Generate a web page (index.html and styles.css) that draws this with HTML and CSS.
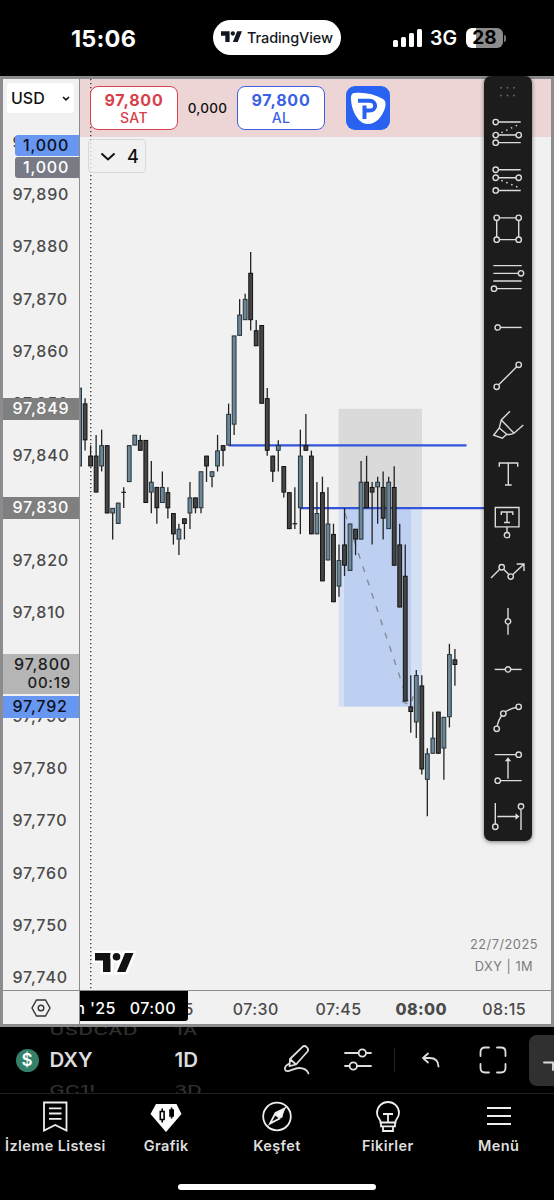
FILE: index.html
```html
<!DOCTYPE html>
<html lang="tr">
<head>
    <meta charset="UTF-8">
    <meta name="viewport" content="width=device-width, initial-scale=1.0">
    <title>DXY 97,800</title>
    <link rel="stylesheet" href="styles.css">
</head>
<body>
    <header class="status">
        <div class="clock">15:06</div>
        <div class="island">
            <svg width="21" height="12" viewBox="0 0 39 21"><path d="M0 0h16v20H8V8H0zM30 0h9l-8 20h-9z"/><circle cx="22" cy="4" r="4"/></svg>
            <span>TradingView</span>
        </div>
        <div class="signal">
            <svg width="30" height="20" viewBox="0 0 30 20">
                <rect x="0" y="12" width="5" height="7" rx="1.5"/><rect x="8" y="9" width="5" height="10" rx="1.5"/>
                <rect x="16" y="5" width="5" height="14" rx="1.5"/><rect x="24" y="1" width="5" height="18" rx="1.5"/>
            </svg>
            <span class="net">3G</span>
            <span class="battery">28</span>
            <i class="nub"></i>
        </div>
    </header>

    <main class="frame">
        <div class="top">
            <aside class="price-axis">
                <button class="currency">USD <svg width="8" height="5" viewBox="0 0 8 5"><path d="M1 1l3 2.8L7 1"/></svg></button>
                <div class="prices" id="prices"></div>
                <div class="tag blue small t-qty1">1,000</div>
                <div class="tag slate small t-qty2">1,000</div>
                <div class="tag grey t-849">97,849</div>
                <div class="tag grey t-830">97,830</div>
                <div class="tag light t-last">97,800<br><small>00:19</small></div>
                <div class="tag blue t-792">97,792</div>
            </aside>
            <section class="plot">
                <div class="band"></div>
                <svg id="chart" width="471" height="911" viewBox="0 0 471 911"></svg>
                <div class="trade">
                    <button class="order sell"><b>97,800</b><span>SAT</span></button>
                    <span class="spread">0,000</span>
                    <button class="order buy"><b>97,800</b><span>AL</span></button>
                    <svg class="broker" width="44" height="44" viewBox="0 0 44 44">
                        <rect width="44" height="44" rx="9" fill="#2962f0"/>
                        <path d="M9 7c9-1 19 1 28 6 3 2 3 5 2 9-3 9-9 16-17 16C12 38 5 24 5 12c0-3 1-5 4-5z" fill="#fff"/>
                        <path d="M12 14.800h11.500c7.500 0 7.500 9.500 0 9.500h-1.500M12 19.800h6v13" fill="none" stroke="none"/>
                        <path d="M12 14.800h11.500c7.500 0 7.500 9.800 0 9.800h-5M18.500 19.500v13.500" fill="none" stroke="#2962f0" stroke-width="4"/>
                    </svg>
                </div>
                <button class="legend"><svg width="16" height="9" viewBox="0 0 16 9"><path d="M1.500 1.500L8 7.500l6.500-6"/></svg>4</button>
                <svg class="mark" width="44" height="26" viewBox="-3 -3 44 26"><g><path d="M0 0h15.500v19H8V7.500H0zM30 0h8.500l-8 19h-8.500z"/><circle cx="21.500" cy="3.800" r="3.800"/></g></svg>
                <div class="watermark">22/7/2025<br>DXY | 1M</div>
            </section>
        </div>
        <div class="time-axis">
            <div class="gear"><svg width="20" height="18" viewBox="0 0 20 18"><path d="M5.500 1h9L19 9l-4.500 8h-9L1 9z"/><circle cx="10" cy="9" r="2.800"/></svg></div>
            <div class="times">
                <span>07:15</span><span>07:30</span><span>07:45</span><span class="hour">08:00</span><span>08:15</span>
                <div class="cursor-time">m '25&nbsp;&nbsp; 07:00</div>
            </div>
        </div>
    </main>

    <nav class="tools" id="tools">
        <svg class="grip" width="48" height="31.600" viewBox="-24 -15.800 48 31.600"><circle cx="-7" cy="-4"/><circle cx="-.5" cy="-4"/><circle cx="6" cy="-4"/><circle cx="-7" cy="3.700"/><circle cx="-.5" cy="3.700"/><circle cx="6" cy="3.700"/></svg>
    </nav>

    <div class="symbol-bar">
        <div class="coin">$</div>
        <div class="wheel symbol"><i>USDCAD</i><b>DXY</b><i>GC1!</i></div>
        <div class="wheel interval"><i>1A</i><b>1D</b><i>3D</i></div>
        <svg class="i-draw" width="30" height="32" viewBox="0 0 30 32"><path d="M8 15L20.500 2.800c2.500-2.200 7 1.500 5 4.700L14 20.500l-6.500 1.700zM8 15l6 5.500M7.500 19.500c-3 1.500-5 4-4.500 6 1.500 4.500 8-1.500 14-1.500 5 0 8 1.500 9.500 5.500"/></svg>
        <svg class="i-sliders" width="28" height="24" viewBox="0 0 28 24"><path d="M1 6h13.500M22 6h5M1 19h4.500M13 19h14"/><circle cx="18.300" cy="6" r="3.700"/><circle cx="9.300" cy="19" r="3.700"/></svg>
        <i class="divider"></i>
        <svg class="i-undo" width="20" height="16" viewBox="0 0 20 16"><path d="M7 1.500L2 6l5 4.500M2 6h6.500c6 0 9 3 9 8.500"/></svg>
        <svg class="i-full" width="28" height="28" viewBox="0 0 28 28"><path d="M10 1.500H6Q1.500 1.500 1.500 6v4M18 1.500h4q4.500 0 4.500 4.500v4M1.500 18v4q0 4.500 4.500 4.500h4M26.500 18v4q0 4.500-4.500 4.500h-4"/></svg>
        <div class="more"><svg width="12" height="12" viewBox="0 0 12 12"><path d="M1 2.500h9V10"/></svg></div>
    </div>

    <footer class="tabs">
        <a><svg width="32" height="32" viewBox="0 0 32 32"><path d="M5 2.500h22.500v28L16.200 25 5 30.500zM10 8.300h12.500M10 13.500h12.500M10 18.800h12.500"/></svg>İzleme Listesi</a>
        <a><svg width="32" height="32" viewBox="0 0 32 32"><path class="fill" d="M6 4h20.500L31.500 14 16 32 .5 14z"/><path class="dark" d="M10.300 11.500h3.800v8h-3.800zM12.200 8.500v3M12.200 19.500v3"/><path class="dark solid" d="M20 10h3.200v6H20zM21.600 7.500v11"/></svg>Grafik</a>
        <a><svg width="32" height="32" viewBox="0 0 32 32"><circle cx="16" cy="16.500" r="13.800"/><path class="fill" d="M23.500 9l-2.300 9-7.700-4z"/><path d="M23.500 8.500l-9 4.500-5.500 10.500 9.500-5zM13.500 14l5.500 4"/></svg>Keşfet</a>
        <a><svg width="32" height="32" viewBox="0 0 32 32"><path d="M8.500 22.500c.5-3-3.500-4.500-3.500-9.500a11 11 0 0 1 22 0c0 5-4 6.500-3.500 9.500zM9 22.500v3.800h14v-3.800M11 26.500V31h10v-4.500M11 14h10M16 14v8"/></svg>Fikirler</a>
        <a><svg width="32" height="32" viewBox="0 0 32 32"><path d="M4 8h24M4 16h24M4 24h24"/></svg>Menü</a>
    </footer>
    <div class="home"></div>

    <script src="chart.js"></script>
</body>
</html>
```

FILE: styles.css
```css
* { box-sizing: border-box; }
body { margin: 0; width: 554px; height: 1200px; background: #000; font-family: Inter, "Noto Sans", sans-serif; position: relative; overflow: hidden; }
button { font-family: inherit; margin: 0; padding: 0; }
svg { display: block; flex: none; }

/* status bar */
.status { height: 76px; display: flex; align-items: center; color: #fff; }
.clock { width: 213px; padding-left: 71px; font-size: 23.5px; font-weight: 700; letter-spacing: 0.2px; }
.island { width: 128px; height: 35px; margin-top: -2px; border-radius: 18px; background: #fff; color: #131722; display: flex; align-items: center; justify-content: center; gap: 5px; font-size: 14.5px; font-weight: 500; letter-spacing: -0.1px; }
.island svg { fill: #131722; }
.signal { display: flex; align-items: center; margin-left: 52px; }
.signal svg { fill: #fff; margin-top: -1px; }
.net { font-size: 19.5px; font-weight: 600; width: 36px; margin-left: 7px; }
.battery { width: 37px; height: 20px; margin-top: -1px; border-radius: 6px; background: linear-gradient(90deg, #fff 28%, #8c8c8c 28%); color: #000; font-size: 19px; font-weight: 700; line-height: 20px; text-align: center; }
.nub { width: 2px; height: 7px; margin-left: 1px; background: #777; border-radius: 0 2px 2px 0; }

/* chart */
.frame { height: 951px; border: 3px solid #8c8c8e; background: #f1f1f1; }
.top { display: flex; height: 912px; border-bottom: 1px solid #8c8c8c; }
.price-axis { width: 77px; border-right: 1px solid #8c8c8c; position: relative; overflow: hidden; color: #4a4a4a; }
.currency { position: absolute; z-index: 2; left: 4px; top: 4px; width: 67px; height: 30px; padding: 0 4px; border: 0; border-radius: 4px; background: #fff; color: #111; font-size: 16px; font-weight: 500; display: flex; align-items: center; justify-content: space-between; }
.currency svg, .legend svg { fill: none; stroke: #111; stroke-width: 1.6; }
.prices { padding-top: 37px; }
.prices div { height: 52.2px; line-height: 52.2px; padding-left: 9.5px; }
.prices div, .tag { font-size: 16px; font-weight: 500; letter-spacing: 0.8px; white-space: nowrap; }
.tag { position: absolute; left: 0; right: 0; height: 22px; line-height: 21px; padding-left: 9.5px; color: #fff; }
.tag small { font-size: 15px; }
.small { left: 12px; height: 21px; padding-left: 8px; border-radius: 3px 0 0 3px; }
.blue { background: #6797f0; color: #0c1020; }
.slate { background: #787b86; }
.grey { background: #7f7f7f; }
.light { background: #b5b5b5; color: #1c1c1c; height: 40px; line-height: 18px; padding-top: 1px; text-align: right; padding-right: 8px; }
.t-qty1 { top: 56px; }
.t-qty2 { top: 78px; }
.t-849 { top: 319px; }
.t-830 { top: 418px; }
.t-last { top: 575px; }
.t-792 { top: 617px; }

.plot { flex: 1; position: relative; overflow: hidden; }
.band { position: absolute; left: 0; right: 0; top: 0; height: 58px; background: #edd5d6; }
#chart { position: relative; }
.trade { position: absolute; left: 10px; top: 7px; height: 44px; display: flex; align-items: center; }
.order { width: 88px; height: 44px; border: 1px solid; border-radius: 8px; background: #fff; display: flex; flex-direction: column; align-items: center; justify-content: center; font-size: 14px; font-weight: 500; line-height: 18px; letter-spacing: 0.4px; padding-top: 2px; }
.order b { font-size: 16px; font-weight: 700; letter-spacing: 0.8px; }
.sell { color: #d8414b; }
.buy { color: #3c5fe4; }
.spread { width: 59px; text-align: center; font-size: 13.5px; font-weight: 500; color: #111; letter-spacing: 0.3px; }
.broker { margin-left: 21px; }
.legend { position: absolute; left: 8px; top: 60px; width: 58px; height: 34px; border: 1px solid #d8d8d8; border-radius: 4px; background: rgba(241, 241, 241, 0.8); display: flex; align-items: center; justify-content: center; gap: 11px; padding-left: 5px; font-size: 18px; font-weight: 500; color: #111; }
.legend svg { stroke-width: 2; }
.mark { position: absolute; left: 12px; top: 871px; }
.mark g { fill: #131313; stroke: #fff; stroke-width: 5; paint-order: stroke; }
.watermark { position: absolute; right: 13px; top: 855px; text-align: center; font-size: 12.8px; line-height: 22px; letter-spacing: 0.5px; color: #7c7c7c; }

.time-axis { display: flex; height: 33px; }
.gear { width: 77px; border-right: 1px solid #8c8c8c; display: flex; align-items: center; justify-content: center; }
.gear svg { fill: none; stroke: #333; stroke-width: 1.4; }
.times { flex: 1; position: relative; overflow: hidden; display: flex; align-items: center; padding-left: 51.5px; padding-top: 3px; font-size: 16px; font-weight: 500; letter-spacing: 0.4px; color: #4a4a4a; }
.times span { width: 82.8px; flex: none; text-align: center; }
.times .hour { font-weight: 800; }
.cursor-time { position: absolute; left: 0; top: 0; width: 108px; height: 30px; line-height: 35px; padding-right: 12px; border-radius: 0 0 3px 0; background: #000; color: #fff; display: flex; justify-content: flex-end; white-space: nowrap; }

/* candles and drawings */
.up { fill: #6d8797; stroke: #24343d; }
.down { fill: #454545; stroke: #111; }
.wick { stroke: #222; stroke-width: 1.3; }
.level { stroke: #3454dc; stroke-width: 2.2; }
.session { stroke: #222; stroke-width: 1.2; stroke-dasharray: 1.2 2.8; }
.stop { fill: #dadada; }
.target { fill: #d6e0f4; }
.target-hit { fill: #bdd0f1; }
.path { stroke: #858b96; stroke-width: 1.4; stroke-dasharray: 6 8; }

/* floating drawing tools */
.tools { position: absolute; left: 483.5px; top: 76px; width: 48.5px; height: 764.5px; border-radius: 7px; background: #1c1c1c; box-shadow: 0 1px 4px rgba(0, 0, 0, 0.5); }
.tools svg { fill: none; stroke: #dcdcdc; stroke-width: 1.4; margin-left: 0.5px; }
.tools circle { r: 2.7px; fill: #1c1c1c; }
.tools .dots { stroke-dasharray: 1.5 3.8; }
.tools .head { fill: #dcdcdc; stroke: none; }
.tools .grip circle { r: 1px; fill: #666; stroke: none; }

/* symbol row */
.symbol-bar { height: 67px; display: flex; align-items: center; border-bottom: 1px solid #222; overflow: hidden; color: #dcdcdc; }
.symbol-bar > * { flex: none; }
.symbol-bar svg { fill: none; stroke: #dedede; stroke-width: 1.8; stroke-linecap: round; stroke-linejoin: round; }
.coin { width: 23px; height: 23px; margin-left: 15.5px; border-radius: 50%; background: #35806b; color: #fff; font-size: 17px; font-weight: 600; line-height: 23px; text-align: center; }
.wheel { display: flex; flex-direction: column; }
.wheel b { font-size: 20.5px; font-weight: 600; line-height: 30px; }
.wheel i { font-style: normal; font-size: 20px; line-height: 30px; height: 30px; letter-spacing: 0.3px; font-weight: 500; color: #303030; transform: scaleY(0.65); }
.symbol { width: 125px; margin-left: 11px; }
.interval { width: 107px; }
.symbol i { letter-spacing: 0.6px; }
.i-sliders { margin-left: 32px; margin-top: -2px; }
.divider { width: 1px; height: 24px; margin-left: 22px; background: #252525; }
.i-undo { margin-left: 26px; }
.i-full { margin-left: 38px; }
.more { width: 40px; height: 51px; margin-left: 22px; border-radius: 8px; background: #303030; padding: 25px 0 0 14px; }

/* bottom tabs */
.tabs { display: flex; height: 90px; padding-top: 6px; }
.tabs a { flex: 1 1 0; min-width: 0; display: flex; flex-direction: column; align-items: center; gap: 5px; font-size: 14.5px; font-weight: 600; line-height: 18px; color: #dedede; white-space: nowrap; letter-spacing: 0.4px; }
.tabs svg { fill: none; stroke: #eee; stroke-width: 1.8; margin-top: -0.5px; }
.tabs .fill { fill: #fff; stroke: none; }
.tabs .dark { stroke: #000; stroke-width: 1.6; }
.tabs .solid { fill: #000; }
.home { width: 198px; height: 6px; margin: 0 auto; border-radius: 3px; background: #fff; }
```

FILE: chart.js
```js
// minute after 07:00, high, body top, body bottom, low, rising
const candles = [
    [-2, 853, 853, 838, 838, 1], [-1, 851, 850, 843, 841, 0], [0, 842, 840, 838, 838, 0], [1, 844, 840, 833, 833, 0],
    [2, 845, 842, 838, 837, 1], [3, 842, 842, 829, 829, 0], [4, 830, 830, 829, 824, 1], [5, 831, 831, 827, 827, 1],
    [6, 834, 833, 833, 830, 1], [7, 842, 842, 835, 835, 1], [8, 844, 844, 842, 842, 1], [9, 844, 843, 841, 841, 0],
    [10, 843, 843, 831, 831, 0], [11, 839, 835, 833, 829, 1], [12, 834, 834, 830, 827, 0], [13, 837, 834, 831, 831, 1],
    [14, 834, 833, 830, 828, 0], [15, 829, 829, 825, 823, 0], [16, 827, 826, 824, 821, 1], [17, 828, 828, 827, 824, 0],
    [18, 835, 832, 829, 826, 1], [19, 832, 832, 830, 829, 0], [20, 837, 837, 830, 829, 1], [21, 840, 840, 838, 835, 0],
    [22, 837, 837, 836, 834, 1], [23, 844, 841, 838, 837, 1], [24, 842, 842, 841, 838, 0], [25, 850, 848, 842, 842, 1],
    [26, 863, 863, 846, 844, 1], [27, 870, 867, 863, 863, 1], [28, 871, 870, 866, 866, 1], [29, 879, 875, 866, 864, 0],
    [30, 866, 864, 861, 861, 0], [31, 865, 865, 850, 850, 0], [32, 853, 851, 841, 840, 0], [33, 840, 840, 837, 835, 0],
    [34, 843, 842, 841, 837, 1], [35, 838, 838, 833, 832, 0], [36, 833, 833, 826, 826, 0], [37, 834, 827, 827, 826, 1],
    [38, 845, 840, 830, 825, 1], [39, 848, 842, 841, 841, 0], [40, 841, 840, 825, 825, 0], [41, 835, 829, 825, 825, 1],
    [42, 836, 833, 816, 816, 0], [43, 834, 827, 820, 820, 1], [44, 827, 825, 812, 812, 0], [45, 823, 820, 815, 813, 1],
    [46, 830, 823, 819, 817, 0], [47, 827, 827, 818, 818, 1], [48, 826, 826, 824, 821, 0], [49, 839, 835, 824, 824, 1],
    [50, 840, 835, 830, 830, 0], [51, 835, 834, 833, 823, 0], [52, 836, 835, 834, 827, 1], [53, 837, 834, 828, 824, 0],
    [54, 836, 835, 826, 826, 1], [55, 838, 834, 819, 819, 0], [56, 827, 823, 811, 811, 0], [57, 823, 817, 793, 793, 0],
    [58, 798, 792, 791, 787, 0], [59, 799, 798, 789, 786, 1], [60, 798, 796, 780, 779, 0], [61, 784, 783, 778, 771, 1],
    [62, 791, 786, 783, 783, 1], [63, 791, 791, 783, 783, 0], [64, 790, 790, 784, 778, 1], [65, 804, 802, 790, 788, 1],
    [66, 803, 801, 800, 796, 0]
];

const x = m => 10.6 + m * 5.52;
const y = p => 115.6 + (890 - p) * 5.224;
const line = (cls, x1, y1, x2, y2) => `<line class="${cls}" x1="${x1}" y1="${y1}" x2="${x2}" y2="${y2}"/>`;
const box = (cls, x1, y1, x2, y2) => `<rect class="${cls}" x="${x1}" y="${y1}" width="${x2 - x1}" height="${y2 - y1}"/>`;

let svg = line("session", 10.8, 0, 10.8, 911);
svg += box("stop", 258.5, y(849), 342, y(830));
svg += box("target", 258.5, y(830), 342, y(792));
svg += box("target-hit", 264, y(830), 331, y(792));
svg += line("level", x(25), y(842), 386.5, y(842));
svg += line("level", x(38), y(830), 410, y(830));
svg += line("path", 265, y(829), 328, y(793));
svg += `<path class="path" fill="none" d="M322 ${y(793)}l9 4l2-9"/>`;
candles.forEach(([m, high, top, bottom, low, rising]) => {
    const cx = x(m);
    svg += line("wick", cx, y(high), cx, y(low));
    if (top === bottom) {
        svg += line("wick", cx - 2.3, y(top), cx + 2.3, y(top));
    } else {
        svg += box(rising ? "up" : "down", cx - 1.9, y(top) + 0.3, cx + 1.9, y(bottom) - 0.3);
    }
});
document.getElementById("chart").innerHTML = svg;

let labels = "";
for (let p = 900; p >= 740; p -= 10) labels += `<div>97,${p}</div>`;
document.getElementById("prices").innerHTML = labels;

const dot = (cx, cy) => `<circle cx="${cx}" cy="${cy}"/>`;
const tools = [
    // long and short position
    '<path d="M-12.3-10.400h25M-12.3 2.600h23M-12.300 10.200h25"/><path class="dots" d="M-6.700.2L12-8.500"/>' + dot(-12.3, -10.4) + dot(-12.3, 2.6) + dot(10.7, 2.6) + dot(-12.3, 10.2),
    '<path d="M-12.3-10.700h25M-12.3-2.700h23M-12.3 10h25"/><path class="dots" d="M-6.700 0L12 7.600"/>' + dot(-12.3, -10.7) + dot(-12.3, -2.7) + dot(10.7, -2.7) + dot(-12.3, 10),
    // rectangle
    '<path d="M-11.300-11.600h22v21.800h-22z"/>' + dot(-11.3, -11.6) + dot(10.7, -11.6) + dot(-11.3, 10.2) + dot(10.7, 10.2),
    // fib retracement
    '<path d="M-14.700-12.800h28.400M-14.700-5.100h28M-14.700 2.500h28.400M-14 10.200h27.700"/>' + dot(13, -5.1) + dot(-14, 10.2),
    // ray and trend line
    '<path d="M-10.300 0h24"/>' + dot(-10.3, 0),
    '<path d="M-11.300 10.400l22-22"/>' + dot(-11.3, 10.4) + dot(10.7, -11.6),
    // brush
    '<path d="M2-14.200L-6.700-5.500L-8.700 2.500L-14.300 9.800L-5.700 12.800L-1.300 8.800Q3 9.500 6 7.800L15.300-.5M-6.700-5.500L6 7.800M-8.700 2.500L-1.300 8.800"/>',
    // text and note
    '<path d="M-8.700-7.700v-3.700H9.700v3.700M.3-11.400v22M-3 10.600h6.700"/>',
    '<path d="M-12.700-16H11V3.400H-12.700zM-6.700-8.500v-3H4.800v3M-1-11.300V-1M-4-1h6M-1 3.400v6"/>' + dot(-1, 11.7),
    // arrow path
    '<path d="M-17 5.500L-6.300-5.200L2.700 4.100L16-8.500M8.700-8.500H16v7"/>' + dot(-6.3, -5.2) + dot(2.7, 4.1),
    // vertical and horizontal line
    '<path d="M0-13.400v26.700"/>' + dot(0, 0),
    '<path d="M-13.300 0h27"/>' + dot(0, 0),
    // curve
    '<path d="M-11.300 10.400Q-10 1-4.700-4.900Q1-10 10.700-11.600"/>' + dot(-11.3, 10.4) + dot(-4.7, -4.9) + dot(10.7, -11.6),
    // price range and date range
    '<path d="M-13.300-12.800h24M0 11.200V-8M-10.300 13.200h24"/><path class="head" d="M-3.200-6.300L0-10.300L3.200-6.300z"/>' + dot(10.7, -12.8) + dot(-10.3, 13.2),
    '<path d="M-12.700-13.400v24M-10.700 0H9M13-10v23.600"/><path class="head" d="M7.500-3.300L11.500 0L7.500 3.300z"/>' + dot(-12.7, 10.3) + dot(13, -10)
];
document.getElementById("tools").innerHTML += tools.map(t => `<svg width="48" height="48.9" viewBox="-24 -24.45 48 48.9">${t}</svg>`).join("");
```
